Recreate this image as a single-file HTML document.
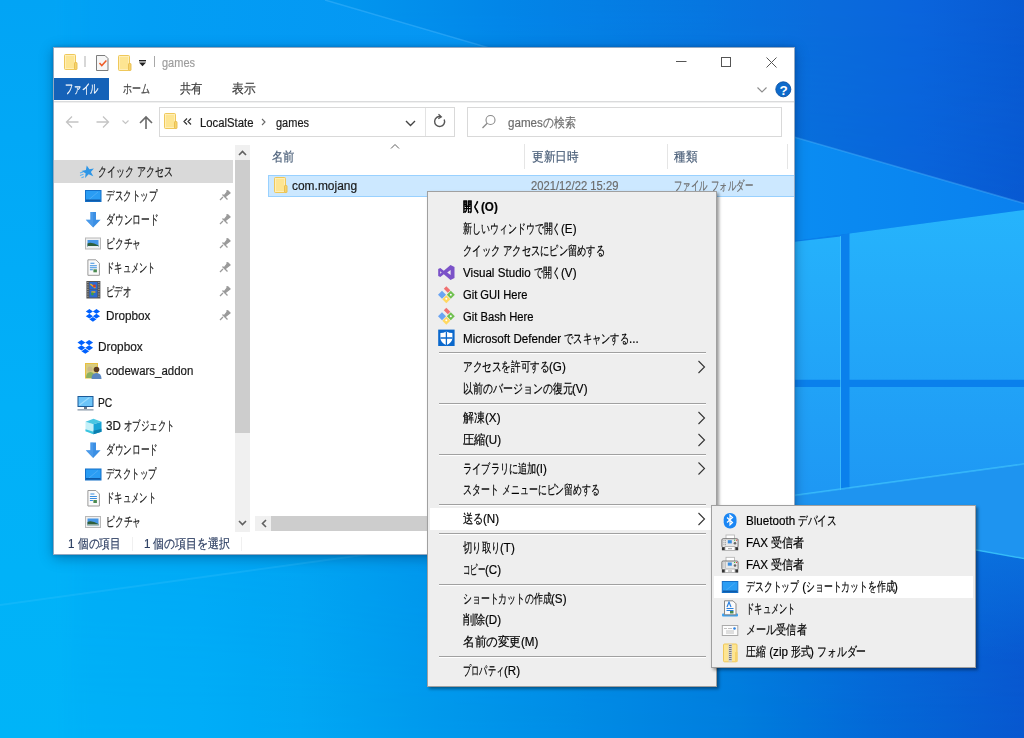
<!DOCTYPE html><html><head><meta charset="utf-8"><style>
html,body{margin:0;padding:0;width:1024px;height:738px;overflow:hidden;}
body{position:relative;font-family:"Liberation Sans",sans-serif;font-size:12px;color:#000;}
.a{position:absolute;}
.t{position:absolute;white-space:nowrap;line-height:16px;font-size:12.5px;height:16px;-webkit-text-stroke:0.2px currentColor;}
.t>span{display:inline-block;transform-origin:0 50%;}
svg{position:absolute;overflow:visible;}
#win{position:absolute;left:53px;top:47px;width:742px;height:508px;box-sizing:border-box;background:#fff;border:1px solid rgba(0,50,110,0.42);box-shadow:0 3px 12px rgba(0,30,70,0.35),0 0 3px rgba(0,30,70,0.25);}
.menu{position:absolute;box-sizing:border-box;background:#eeeeee;border:1px solid #a0a0a0;box-shadow:2px 2px 3px rgba(0,0,0,0.4);}
.sep{position:absolute;height:1px;background:#a0a0a0;}
</style></head><body>
<svg style="left:0;top:0" width="1024" height="738" viewBox="0 0 1024 738">
<defs>
<linearGradient id="baseB" x1="0" y1="0" x2="1024" y2="0" gradientUnits="userSpaceOnUse">
<stop offset="0" stop-color="#00b4f8"/>
<stop offset="0.195" stop-color="#00aef8"/>
<stop offset="0.293" stop-color="#02a8f4"/>
<stop offset="0.405" stop-color="#009cee"/>
<stop offset="0.72" stop-color="#007ede"/>
<stop offset="0.85" stop-color="#046ad8"/>
<stop offset="1" stop-color="#0858d0"/>
</linearGradient>
<linearGradient id="baseT" x1="0" y1="0" x2="1024" y2="0" gradientUnits="userSpaceOnUse">
<stop offset="0" stop-color="#02a6f6"/>
<stop offset="0.3" stop-color="#029af0"/>
<stop offset="0.488" stop-color="#0286e8"/>
<stop offset="0.684" stop-color="#0676e0"/>
<stop offset="0.8" stop-color="#0a6cdc"/>
<stop offset="0.9" stop-color="#0a64dc"/>
<stop offset="1" stop-color="#085ad2"/>
</linearGradient>
<linearGradient id="vfm" x1="0" y1="0" x2="0" y2="738" gradientUnits="userSpaceOnUse"><stop offset="0" stop-color="#fff"/><stop offset="1" stop-color="#000"/></linearGradient>
<mask id="vmask"><rect x="0" y="0" width="1024" height="738" fill="url(#vfm)"/></mask>
<linearGradient id="wedge" x1="0" y1="0" x2="1024" y2="0" gradientUnits="userSpaceOnUse">
<stop offset="0" stop-color="#02a6f6"/>
<stop offset="0.146" stop-color="#029ef4"/>
<stop offset="0.78" stop-color="#0a8cf2"/>
<stop offset="1" stop-color="#0a80ee"/>
</linearGradient>
<linearGradient id="pane" x1="0" y1="210" x2="0" y2="490" gradientUnits="userSpaceOnUse">
<stop offset="0" stop-color="#26b4fc"/>
<stop offset="1" stop-color="#1e98f4"/>
</linearGradient>
<linearGradient id="lfm" x1="0" y1="0" x2="90" y2="0" gradientUnits="userSpaceOnUse"><stop offset="0" stop-color="#fff"/><stop offset="0.6" stop-color="#fff"/><stop offset="1" stop-color="#000"/></linearGradient>
<mask id="lmask"><rect x="0" y="0" width="90" height="738" fill="url(#lfm)"/></mask>
<linearGradient id="lft" x1="0" y1="0" x2="0" y2="738" gradientUnits="userSpaceOnUse">
<stop offset="0" stop-color="#02a4f5"/>
<stop offset="0.55" stop-color="#02b0f8"/>
<stop offset="1" stop-color="#00b4f8"/>
</linearGradient>
</defs>
<rect width="1024" height="738" fill="url(#baseB)"/><rect width="1024" height="738" fill="url(#baseT)" mask="url(#vmask)"/>
<polygon points="0,0 325,0 794,137 1040,208 0,348" fill="url(#wedge)"/>
<rect x="0" y="0" width="90" height="738" fill="url(#lft)" mask="url(#lmask)"/>
<polyline points="325,0 794,137 1040,208" fill="none" stroke="#5cc0ff" stroke-opacity="0.35" stroke-width="1.5"/>
<linearGradient id="flr" x1="0" y1="540" x2="0" y2="660" gradientUnits="userSpaceOnUse"><stop offset="0" stop-color="#0a74e0" stop-opacity="0.9"/><stop offset="1" stop-color="#0a74e0" stop-opacity="0"/></linearGradient>
<polygon points="728,505 1024,558 1024,738 728,738" fill="url(#flr)"/>
<polygon points="728,505 1024,464 1024,558" fill="#1e94f0"/>
<line x1="728" y1="505" x2="1024" y2="558.5" stroke="#40d0ff" stroke-width="1.5" stroke-opacity="0.8"/>
<polygon points="760,245.6 1031,209 1031,463 760,500" fill="#0a80ec"/>
<polygon points="760,245.6 840.7,236.6 840.7,379.8 760,379.8" fill="url(#pane)"/>
<polygon points="849.5,233.5 1031,209 1031,379.8 849.5,379.8" fill="url(#pane)"/>
<polygon points="760,387 840.7,387 840.7,489.6 760,500" fill="url(#pane)"/>
<polygon points="849.5,387 1031,387 1031,463 849.5,488.3" fill="url(#pane)"/>
<line x1="0" y1="605" x2="1031" y2="463" stroke="#48c8ff" stroke-opacity="0.22" stroke-width="2"/>
<line x1="840.5" y1="236" x2="840.5" y2="490" stroke="#50d0ff" stroke-opacity="0.6" stroke-width="1"/><line x1="760" y1="500" x2="1031" y2="463" stroke="#48d0ff" stroke-opacity="0.5" stroke-width="1.3"/>
</svg>
<div id="win"></div>
<svg style="left:60px;top:50px" width="100" height="24" viewBox="60 50 100 24"><rect x="64.5" y="54.5" width="11" height="15" rx="1" fill="#fde592" stroke="#efc85a"/><rect x="65.5" y="55.5" width="9" height="13" fill="none" stroke="#fff0c0" stroke-width="0.8"/><rect x="74.5" y="62.5" width="2.5" height="7" rx="0.6" fill="#f6d36c" stroke="#e8bc4c" stroke-width="0.9"/><rect x="84.5" y="56" width="1" height="11" fill="#b0b0b0"/><path d="M96.5,55.5 h8.5 l3,3 v12 h-11.5z" fill="#f6f6f6" stroke="#7d7d7d" stroke-width="1"/><path d="M99.5,63 l2.3,2.6 l4.6,-5" fill="none" stroke="#ee5a26" stroke-width="1.5"/><rect x="118.5" y="55.5" width="11" height="15" rx="1" fill="#fde592" stroke="#efc85a"/><rect x="119.5" y="56.5" width="9" height="13" fill="none" stroke="#fff0c0" stroke-width="0.8"/><rect x="128.5" y="63.5" width="2.5" height="7" rx="0.6" fill="#f6d36c" stroke="#e8bc4c" stroke-width="0.9"/><rect x="139" y="60" width="7" height="1.4" fill="#222"/><path d="M139,62.5 h7 l-3.5,3.8z" fill="#222"/><rect x="154" y="56" width="1" height="11" fill="#a8a8a8"/></svg>
<div class="t" style="left:162px;top:55px;width:33px;color:#9d9d9d;"><span>games</span></div>
<svg style="left:670px;top:52px" width="115" height="20" viewBox="670 52 115 20"><rect x="676" y="61" width="10.5" height="1" fill="#555"/><rect x="721.5" y="57.5" width="9" height="9" fill="none" stroke="#555" stroke-width="1"/><path d="M766.5,57.5 L776.5,67.5 M776.5,57.5 L766.5,67.5" stroke="#555" stroke-width="1"/></svg>
<div class="a" style="left:54px;top:78px;width:55px;height:22px;background:#1562b8;"></div>
<div class="t" style="left:65px;top:81px;width:33px;color:#fff;"><span>ファイル</span></div>
<div class="t" style="left:123px;top:81px;width:27px;color:#3c3c3c;"><span>ホーム</span></div>
<div class="t" style="left:179.5px;top:81px;width:22.5px;color:#3c3c3c;"><span>共有</span></div>
<div class="t" style="left:231.5px;top:81px;width:23.5px;color:#3c3c3c;"><span>表示</span></div>
<svg style="left:750px;top:78px" width="44" height="24" viewBox="750 78 44 24"><path d="M757.5,87.5 l4.5,4.5 l4.5,-4.5" fill="none" stroke="#8c8c8c" stroke-width="1.1"/><circle cx="783.3" cy="89.3" r="7.5" fill="#0d6acb" stroke="#0a52a6" stroke-width="0.9"/><text x="783.5" y="94.6" text-anchor="middle" font-family="Liberation Sans" font-weight="bold" font-size="13.5" fill="#fff">?</text></svg>
<div class="a" style="left:54px;top:101px;width:740px;height:1px;background:#dadbdc;"></div>
<div class="a" style="left:54px;top:102px;width:740px;height:1px;background:#f0f0f0;"></div>
<svg style="left:60px;top:108px" width="100" height="28" viewBox="60 108 100 28"><path d="M78.5,122 h-11.5 M72,116.5 l-5.5,5.5 l5.5,5.5" fill="none" stroke="#c4c4c4" stroke-width="1.3"/><path d="M96.5,122 h11.5 M103,116.5 l5.5,5.5 l-5.5,5.5" fill="none" stroke="#c4c4c4" stroke-width="1.3"/><path d="M122.5,120.5 l3,3 l3,-3" fill="none" stroke="#c4c4c4" stroke-width="1.1"/><path d="M146,129 v-12 M140,123 l6,-6 l6,6" fill="none" stroke="#6a6a6a" stroke-width="1.6"/></svg>
<div class="a" style="left:159px;top:107px;width:296px;height:30px;box-sizing:border-box;border:1px solid #d9d9d9;"></div>
<div class="a" style="left:425px;top:108px;width:1px;height:28px;background:#e3e3e3;"></div>
<svg style="left:160px;top:108px" width="295" height="28" viewBox="160 108 295 28"><rect x="164.5" y="113.5" width="11" height="15" rx="1" fill="#fde592" stroke="#efc85a"/><rect x="165.5" y="114.5" width="9" height="13" fill="none" stroke="#fff0c0" stroke-width="0.8"/><rect x="174.5" y="121.5" width="2.5" height="7" rx="0.6" fill="#f6d36c" stroke="#e8bc4c" stroke-width="0.9"/><path d="M187,118.5 l-3,3 l3,3 M191,118.5 l-3,3 l3,3" fill="none" stroke="#333" stroke-width="1.2"/><path d="M262,119 l3,3 l-3,3" fill="none" stroke="#666" stroke-width="1.1"/><path d="M406,121 l4.5,4.5 l4.5,-4.5" fill="none" stroke="#444" stroke-width="1.4"/><path d="M444.2,119.5 a5,5 0 1 1 -3.2,-2.8" fill="none" stroke="#555" stroke-width="1.4"/><path d="M438.5,114.3 l2.8,2.6 l-3,1.8" fill="none" stroke="#555" stroke-width="1.3"/></svg>
<div class="t" style="left:199.5px;top:114.5px;width:53.5px;color:#1a1a1a;"><span>LocalState</span></div>
<div class="t" style="left:275.5px;top:114.5px;width:33px;color:#1a1a1a;"><span>games</span></div>
<div class="a" style="left:467px;top:107px;width:315px;height:30px;box-sizing:border-box;border:1px solid #d9d9d9;"></div>
<svg style="left:478px;top:110px" width="24" height="24" viewBox="478 110 24 24"><circle cx="490.5" cy="120" r="4.5" fill="none" stroke="#8a8a8a" stroke-width="1.1"/><path d="M487.2,123.3 l-4.7,4.7" stroke="#8a8a8a" stroke-width="1.3"/></svg>
<div class="t" style="left:508px;top:114.5px;width:67.5px;color:#6d6d6d;"><span>gamesの検索</span></div>
<div class="a" style="left:54px;top:160px;width:179px;height:23px;background:#d9d9d9;"></div>
<div class="a" style="left:235px;top:145px;width:15px;height:387px;background:#f0f0f0;"></div>
<div class="a" style="left:235px;top:160px;width:15px;height:273px;background:#cdcdcd;"></div>
<svg style="left:235px;top:145px" width="15" height="387" viewBox="235 145 15 387"><path d="M239,155 l3.5,-3.5 l3.5,3.5" fill="none" stroke="#606060" stroke-width="1.6"/><path d="M239,521 l3.5,3.5 l3.5,-3.5" fill="none" stroke="#606060" stroke-width="1.6"/></svg>
<svg style="left:76px;top:164px" width="20" height="16" viewBox="76 164 20 16"><g transform="rotate(-12 87.5 171.5)"><path d="M88.0,165.5 l1.8,4.3 h4.6 l-3.7,2.9 l1.5,4.6 l-4.2,-2.8 l-4.2,2.8 l1.5,-4.6 l-3.7,-2.9 h4.6z" fill="#2e96e6"/></g><path d="M80.0,173.0 l3,-1 M80.0,175.5 l3.5,-1.3 M81.5,177.8 l2.5,-1" stroke="#5ab0f0" stroke-width="1.1"/></svg>
<div class="t" style="left:98.2px;top:163.5px;width:74.8px;color:#1a1a1a;"><span>クイック アクセス</span></div>
<svg style="left:80px;top:183px" width="24" height="24" viewBox="80 183 24 24"><rect x="85.5" y="190.5" width="15.5" height="11" fill="#2a9df4" stroke="#1570c8"/><path d="M89,199.5 L98,192" stroke="#4aacf6" stroke-width="1"/><rect x="86" y="199.5" width="14.5" height="1.6" fill="#0e5aa8"/></svg>
<div class="t" style="left:106.3px;top:187.5px;width:51.1px;color:#1a1a1a;"><span>デスクトップ</span></div>
<svg style="left:218px;top:188px" width="16" height="14" viewBox="218 188 16 14"><path d="M223,197 l-3,3 M222.5,194.5 l5,5 M224,196 l4,-5 l2,2 l-5,4z M226.5,190.5 l3,3" fill="#9a9a9a" stroke="#9a9a9a" stroke-width="1.3"/></svg>
<svg style="left:80px;top:207px" width="24" height="24" viewBox="80 207 24 24"><path d="M90.4,212 h5.6 v7.8 h4.6 l-7.4,7.8 l-7.4,-7.8 h4.6z" fill="#3b8fe4"/><path d="M90.4,212 h2.8 v15.6 l-7.4,-7.8 h4.6z" fill="#5aa6f0" fill-opacity="0.5"/></svg>
<div class="t" style="left:106.3px;top:211.5px;width:52.5px;color:#1a1a1a;"><span>ダウンロード</span></div>
<svg style="left:218px;top:212px" width="16" height="14" viewBox="218 212 16 14"><path d="M223,221 l-3,3 M222.5,218.5 l5,5 M224,220 l4,-5 l2,2 l-5,4z M226.5,214.5 l3,3" fill="#9a9a9a" stroke="#9a9a9a" stroke-width="1.3"/></svg>
<svg style="left:80px;top:231px" width="24" height="24" viewBox="80 231 24 24"><rect x="85.5" y="238.0" width="15" height="11" fill="#f0f0f0" stroke="#b8b8b8"/><rect x="87.5" y="240.0" width="11" height="7" fill="#4596e6"/><path d="M87.5,243.5 q4,-2 11,2 v1.5 h-11z" fill="#2f5f3a"/><rect x="87.5" y="246.0" width="11" height="1" fill="#e8eef4"/></svg>
<div class="t" style="left:106.3px;top:235.5px;width:35px;color:#1a1a1a;"><span>ピクチャ</span></div>
<svg style="left:218px;top:236px" width="16" height="14" viewBox="218 236 16 14"><path d="M223,245 l-3,3 M222.5,242.5 l5,5 M224,244 l4,-5 l2,2 l-5,4z M226.5,238.5 l3,3" fill="#9a9a9a" stroke="#9a9a9a" stroke-width="1.3"/></svg>
<svg style="left:80px;top:255px" width="24" height="24" viewBox="80 255 24 24"><path d="M87.9,259.8 h8 l3.5,3.5 v12 h-11.5z" fill="#fafafa" stroke="#9a9a9a"/><path d="M90.4,263.3 h4 M89.9,265.8 h7 M89.9,267.8 h7 M89.9,269.8 h3" stroke="#3a8ee0" stroke-width="1.1"/><rect x="93.4" y="269.3" width="3.5" height="3" fill="#4a8a50"/></svg>
<div class="t" style="left:106.3px;top:259.5px;width:49.5px;color:#1a1a1a;"><span>ドキュメント</span></div>
<svg style="left:218px;top:260px" width="16" height="14" viewBox="218 260 16 14"><path d="M223,269 l-3,3 M222.5,266.5 l5,5 M224,268 l4,-5 l2,2 l-5,4z M226.5,262.5 l3,3" fill="#9a9a9a" stroke="#9a9a9a" stroke-width="1.3"/></svg>
<svg style="left:80px;top:279px" width="24" height="24" viewBox="80 279 24 24"><rect x="86.4" y="281" width="14" height="17.5" fill="#555"/><rect x="89.4" y="282" width="8" height="7.5" fill="#2c6ad0"/><rect x="89.4" y="290" width="8" height="7.5" fill="#2c6ad0"/><path d="M90.4,284 l5,4 M91.4,292 h4" stroke="#e8b020" stroke-width="1.6"/><circle cx="94.4" cy="286" r="1.4" fill="#d43a2a"/><circle cx="92.4" cy="294" r="1.4" fill="#38a048"/><path d="M87.9,282 v16 M98.9,282 v16" stroke="#bbb" stroke-width="1" stroke-dasharray="1 1.3"/></svg>
<div class="t" style="left:106.3px;top:283.5px;width:25.3px;color:#1a1a1a;"><span>ビデオ</span></div>
<svg style="left:218px;top:284px" width="16" height="14" viewBox="218 284 16 14"><path d="M223,293 l-3,3 M222.5,290.5 l5,5 M224,292 l4,-5 l2,2 l-5,4z M226.5,286.5 l3,3" fill="#9a9a9a" stroke="#9a9a9a" stroke-width="1.3"/></svg>
<svg style="left:80px;top:303px" width="24" height="24" viewBox="80 303 24 24"><g transform="translate(85.8,309) scale(0.95)"><path d="M3.8,0 L0,2.5 L3.8,5 L7.5,2.5z M11.2,0 L7.5,2.5 L11.2,5 L15,2.5z M3.8,5 L0,7.5 L3.8,10 L7.5,7.5z M11.2,5 L7.5,7.5 L11.2,10 L15,7.5z M7.5,8.3 L3.8,10.8 L7.5,13.3 L11.2,10.8z" fill="#0061fe"/></g></svg>
<div class="t" style="left:106.3px;top:307.5px;width:44.4px;color:#1a1a1a;"><span>Dropbox</span></div>
<svg style="left:218px;top:308px" width="16" height="14" viewBox="218 308 16 14"><path d="M223,317 l-3,3 M222.5,314.5 l5,5 M224,316 l4,-5 l2,2 l-5,4z M226.5,310.5 l3,3" fill="#9a9a9a" stroke="#9a9a9a" stroke-width="1.3"/></svg>
<svg style="left:74px;top:336px" width="24" height="20" viewBox="74 336 24 20"><g transform="translate(77.5,340) scale(1.04)"><path d="M3.8,0 L0,2.5 L3.8,5 L7.5,2.5z M11.2,0 L7.5,2.5 L11.2,5 L15,2.5z M3.8,5 L0,7.5 L3.8,10 L7.5,7.5z M11.2,5 L7.5,7.5 L11.2,10 L15,7.5z M7.5,8.3 L3.8,10.8 L7.5,13.3 L11.2,10.8z" fill="#0061fe"/></g></svg>
<div class="t" style="left:98.3px;top:338.5px;width:44.7px;color:#1a1a1a;"><span>Dropbox</span></div>
<svg style="left:82px;top:360px" width="24" height="22" viewBox="82 360 24 22"><rect x="85.5" y="363.5" width="12" height="14.5" fill="#d8cc80" stroke="#e8c040"/><circle cx="90" cy="369" r="2.6" fill="#c8b888"/><path d="M86,378 q0,-6 4.5,-6 q4,0 4.5,6z" fill="#8cb060"/><circle cx="96.5" cy="369.5" r="2.8" fill="#5a3a20"/><path d="M91.5,379 q0,-6 5,-6 q5,0 5,6z" fill="#5a86c0"/></svg>
<div class="t" style="left:106.4px;top:362.5px;width:87.3px;color:#1a1a1a;"><span>codewars_addon</span></div>
<svg style="left:74px;top:392px" width="24" height="22" viewBox="74 392 24 22"><rect x="78.0" y="396.5" width="15" height="10" fill="#6cc4f8" stroke="#1c5a98"/><path d="M79.5,405 L89.5,397.5" stroke="#9adafc" stroke-width="1.3"/><rect x="84.0" y="407" width="3" height="2" fill="#6a7a8a"/><rect x="77.5" y="409.2" width="16" height="1.3" fill="#8a9aaa"/></svg>
<div class="t" style="left:98.3px;top:394.5px;width:14.3px;color:#1a1a1a;"><span>PC</span></div>
<svg style="left:80px;top:414px" width="24" height="24" viewBox="80 414 24 24"><path d="M85.5,421.7 L93.5,424.2 L93.5,434.2 L85.5,431.2z" fill="#c4f0f8"/><path d="M85.5,429.2 L93.5,431.7 L93.5,434.2 L85.5,431.2z" fill="#38c4e0"/><path d="M85.5,421.7 L93.5,424.2 L101.5,421.7 L93.5,418.7z" fill="#48c6e2"/><path d="M93.5,424.2 L101.5,421.7 L101.5,431.7 L93.5,434.2z" fill="#18a4d6"/><path d="M93.5,430.7 L101.5,428.7 L101.5,431.7 L93.5,434.2z" fill="#0a80b0"/></svg>
<div class="t" style="left:106.4px;top:418px;width:68.5px;color:#1a1a1a;"><span>3D オブジェクト</span></div>
<svg style="left:80px;top:438px" width="24" height="24" viewBox="80 438 24 24"><path d="M90.4,442.5 h5.6 v7.8 h4.6 l-7.4,7.8 l-7.4,-7.8 h4.6z" fill="#3b8fe4"/><path d="M90.4,442.5 h2.8 v15.6 l-7.4,-7.8 h4.6z" fill="#5aa6f0" fill-opacity="0.5"/></svg>
<div class="t" style="left:106.4px;top:442px;width:52.1px;color:#1a1a1a;"><span>ダウンロード</span></div>
<svg style="left:80px;top:462px" width="24" height="24" viewBox="80 462 24 24"><rect x="85.5" y="469.0" width="15.5" height="11" fill="#2a9df4" stroke="#1570c8"/><path d="M89,478.0 L98,470.5" stroke="#4aacf6" stroke-width="1"/><rect x="86" y="478.0" width="14.5" height="1.6" fill="#0e5aa8"/></svg>
<div class="t" style="left:106.4px;top:466px;width:50.9px;color:#1a1a1a;"><span>デスクトップ</span></div>
<svg style="left:80px;top:486px" width="24" height="24" viewBox="80 486 24 24"><path d="M87.9,490.5 h8 l3.5,3.5 v12 h-11.5z" fill="#fafafa" stroke="#9a9a9a"/><path d="M90.4,494 h4 M89.9,496.5 h7 M89.9,498.5 h7 M89.9,500.5 h3" stroke="#3a8ee0" stroke-width="1.1"/><rect x="93.4" y="500" width="3.5" height="3" fill="#4a8a50"/></svg>
<div class="t" style="left:106.4px;top:490px;width:50px;color:#1a1a1a;"><span>ドキュメント</span></div>
<svg style="left:80px;top:509px" width="24" height="24" viewBox="80 509 24 24"><rect x="85.5" y="516.5" width="15" height="11" fill="#f0f0f0" stroke="#b8b8b8"/><rect x="87.5" y="518.5" width="11" height="7" fill="#4596e6"/><path d="M87.5,522 q4,-2 11,2 v1.5 h-11z" fill="#2f5f3a"/><rect x="87.5" y="524.5" width="11" height="1" fill="#e8eef4"/></svg>
<div class="t" style="left:106.4px;top:513.5px;width:35.1px;color:#1a1a1a;"><span>ピクチャ</span></div>
<div class="t" style="left:272px;top:148.5px;width:22.5px;color:#4c607a;"><span>名前</span></div>
<svg style="left:388px;top:142px" width="14" height="8" viewBox="388 142 14 8"><path d="M391,148.5 l4,-4 l4,4" fill="none" stroke="#606060" stroke-width="1"/></svg>
<div class="a" style="left:524px;top:144px;width:1px;height:25px;background:#e5e5e5;"></div>
<div class="a" style="left:667px;top:144px;width:1px;height:25px;background:#e5e5e5;"></div>
<div class="a" style="left:787px;top:144px;width:1px;height:25px;background:#e5e5e5;"></div>
<div class="t" style="left:531.5px;top:148.5px;width:46.7px;color:#4c607a;"><span>更新日時</span></div>
<div class="t" style="left:674px;top:148.5px;width:23.3px;color:#4c607a;"><span>種類</span></div>
<div class="a" style="left:268px;top:175px;width:526px;height:22px;box-sizing:border-box;background:#cce8ff;border:1px solid #99d1ff;border-right:none;"></div>
<svg style="left:270px;top:174px" width="24" height="24" viewBox="270 174 24 24"><rect x="274.5" y="177.5" width="11" height="15" rx="1" fill="#fde592" stroke="#efc85a"/><rect x="275.5" y="178.5" width="9" height="13" fill="none" stroke="#fff0c0" stroke-width="0.8"/><rect x="284.5" y="185.5" width="2.5" height="7" rx="0.6" fill="#f6d36c" stroke="#e8bc4c" stroke-width="0.9"/></svg>
<div class="t" style="left:292.2px;top:178px;width:65.1px;color:#1a1a1a;"><span>com.mojang</span></div>
<div class="t" style="left:531px;top:178px;width:87.4px;color:#6d6d6d;"><span>2021/12/22 15:29</span></div>
<div class="t" style="left:674px;top:178px;width:79.2px;color:#6d6d6d;"><span>ファイル フォルダー</span></div>
<div class="a" style="left:255px;top:516px;width:539px;height:15px;background:#f0f0f0;"></div>
<div class="a" style="left:271px;top:516px;width:523px;height:15px;background:#cdcdcd;"></div>
<svg style="left:255px;top:516px" width="16" height="15" viewBox="255 516 16 15"><path d="M266,520 l-3.5,3.5 l3.5,3.5" fill="none" stroke="#606060" stroke-width="1.6"/></svg>
<div class="t" style="left:68.2px;top:535.5px;width:52.5px;color:#2c3e62;"><span>1 個の項目</span></div>
<div class="a" style="left:132px;top:537px;width:1px;height:14px;background:#f0f0f0;"></div>
<div class="t" style="left:143.5px;top:535.5px;width:86.6px;color:#2c3e62;"><span>1 個の項目を選択</span></div>
<div class="a" style="left:241px;top:537px;width:1px;height:14px;background:#f0f0f0;"></div>
<div class="menu" style="left:427px;top:191px;width:290px;height:496px;"></div>
<div class="a" style="left:430px;top:508px;width:284px;height:22px;background:#fff;"></div>
<div class="t" style="left:462.8px;top:199px;width:35.2px;color:#000;font-weight:bold;"><span>開く(O)</span></div>
<div class="t" style="left:462.8px;top:221px;width:113.9px;color:#000;"><span>新しいウィンドウで開く(E)</span></div>
<div class="t" style="left:462.8px;top:243px;width:142.2px;color:#000;"><span>クイック アクセスにピン留めする</span></div>
<div class="t" style="left:462.8px;top:265px;width:113.6px;color:#000;"><span>Visual Studio で開く(V)</span></div>
<div class="t" style="left:462.8px;top:287px;width:64.4px;color:#000;"><span>Git GUI Here</span></div>
<div class="t" style="left:462.8px;top:309px;width:70.5px;color:#000;"><span>Git Bash Here</span></div>
<div class="t" style="left:462.8px;top:331px;width:176.1px;color:#000;"><span>Microsoft Defender でスキャンする...</span></div>
<div class="t" style="left:462.8px;top:359px;width:103.3px;color:#000;"><span>アクセスを許可する(G)</span></div>
<div class="t" style="left:462.8px;top:381px;width:125px;color:#000;"><span>以前のバージョンの復元(V)</span></div>
<div class="t" style="left:462.8px;top:410px;width:37.4px;color:#000;"><span>解凍(X)</span></div>
<div class="t" style="left:462.8px;top:432px;width:38.6px;color:#000;"><span>圧縮(U)</span></div>
<div class="t" style="left:462.8px;top:460.5px;width:84.5px;color:#000;"><span>ライブラリに追加(I)</span></div>
<div class="t" style="left:462.8px;top:482px;width:136.8px;color:#000;"><span>スタート メニューにピン留めする</span></div>
<div class="t" style="left:462.8px;top:511px;width:36.6px;color:#000;"><span>送る(N)</span></div>
<div class="t" style="left:462.8px;top:540px;width:52.3px;color:#000;"><span>切り取り(T)</span></div>
<div class="t" style="left:462.8px;top:562px;width:38.6px;color:#000;"><span>コピー(C)</span></div>
<div class="t" style="left:462.8px;top:590.5px;width:104.2px;color:#000;"><span>ショートカットの作成(S)</span></div>
<div class="t" style="left:462.8px;top:612px;width:38.6px;color:#000;"><span>削除(D)</span></div>
<div class="t" style="left:462.8px;top:634px;width:75.5px;color:#000;"><span>名前の変更(M)</span></div>
<div class="t" style="left:462.8px;top:663px;width:57px;color:#000;"><span>プロパティ(R)</span></div>
<div class="sep" style="left:439px;top:352px;width:267px;"></div>
<div class="a" style="left:439px;top:353px;width:267px;height:1px;background:#fff;"></div>
<div class="sep" style="left:439px;top:403px;width:267px;"></div>
<div class="a" style="left:439px;top:404px;width:267px;height:1px;background:#fff;"></div>
<div class="sep" style="left:439px;top:454px;width:267px;"></div>
<div class="a" style="left:439px;top:455px;width:267px;height:1px;background:#fff;"></div>
<div class="sep" style="left:439px;top:504px;width:267px;"></div>
<div class="a" style="left:439px;top:505px;width:267px;height:1px;background:#fff;"></div>
<div class="sep" style="left:439px;top:533px;width:267px;"></div>
<div class="a" style="left:439px;top:534px;width:267px;height:1px;background:#fff;"></div>
<div class="sep" style="left:439px;top:584px;width:267px;"></div>
<div class="a" style="left:439px;top:585px;width:267px;height:1px;background:#fff;"></div>
<div class="sep" style="left:439px;top:656px;width:267px;"></div>
<div class="a" style="left:439px;top:657px;width:267px;height:1px;background:#fff;"></div>
<svg style="left:695px;top:359px" width="14" height="16" viewBox="695 359 14 16"><path d="M698.5,361 l6,6 l-6,6" fill="none" stroke="#333" stroke-width="1.1"/></svg>
<svg style="left:695px;top:410px" width="14" height="16" viewBox="695 410 14 16"><path d="M698.5,412 l6,6 l-6,6" fill="none" stroke="#333" stroke-width="1.1"/></svg>
<svg style="left:695px;top:432px" width="14" height="16" viewBox="695 432 14 16"><path d="M698.5,434 l6,6 l-6,6" fill="none" stroke="#333" stroke-width="1.1"/></svg>
<svg style="left:695px;top:460px" width="14" height="16" viewBox="695 460 14 16"><path d="M698.5,462.5 l6,6 l-6,6" fill="none" stroke="#333" stroke-width="1.1"/></svg>
<svg style="left:695px;top:511px" width="14" height="16" viewBox="695 511 14 16"><path d="M698.5,513 l6,6 l-6,6" fill="none" stroke="#333" stroke-width="1.1"/></svg>
<svg style="left:436px;top:262px" width="20" height="20" viewBox="436 262 20 20"><path d="M450.5,265 L454.5,267 L454.5,278 L450.5,280 L443.8,274.2 L440.3,277 L438.2,276 L438.2,269 L440.3,268 L443.8,270.8z M450.6,270 L447.2,272.5 L450.6,275z M440.2,271.3 v2.4 l1.5,-1.2z" fill="#7b52c8" fill-rule="evenodd"/></svg>
<svg style="left:436px;top:284px" width="20" height="20" viewBox="436 284 20 20"><path d="M446.3,286.2 l4,4 l-2.5,2.5 l-4,-4z" fill="#f07070"/><path d="M450.8,290.7 l4,4 l-4,4 l-4,-4z" fill="#70c050"/><circle cx="450.8" cy="294.7" r="1" fill="#fff"/><path d="M446.3,295.2 l4,4 l-4,4 l-4,-4z" fill="#ffd860"/><circle cx="446.3" cy="298.7" r="1" fill="#fff"/><path d="M442,290.7 l4,4 l-4,4 l-4,-4z" fill="#6aa4f2"/></svg>
<svg style="left:436px;top:306px" width="20" height="20" viewBox="436 306 20 20"><path d="M446.3,307.8 l4,4 l-2.5,2.5 l-4,-4z" fill="#f07070"/><path d="M450.8,312.3 l4,4 l-4,4 l-4,-4z" fill="#70c050"/><circle cx="450.8" cy="316.3" r="1" fill="#fff"/><path d="M446.3,316.8 l4,4 l-4,4 l-4,-4z" fill="#ffd860"/><circle cx="446.3" cy="320.3" r="1" fill="#fff"/><path d="M442,312.3 l4,4 l-4,4 l-4,-4z" fill="#6aa4f2"/></svg>
<svg style="left:436px;top:328px" width="20" height="20" viewBox="436 328 20 20"><rect x="438.2" y="329.6" width="16.4" height="16.4" fill="#0a68cc"/><path d="M446.4,331.5 q3,1.5 6,1.5 v5 q0,4.5 -6,7.3 q-6,-2.8 -6,-7.3 v-5 q3,0 6,-1.5z" fill="#fff"/><path d="M446.4,331.5 v13.8 M440.4,338 h12" stroke="#0a68cc" stroke-width="1.3"/></svg>
<div class="menu" style="left:711px;top:505px;width:265px;height:163px;"></div>
<div class="a" style="left:714px;top:576px;width:259px;height:22px;background:#fff;"></div>
<div class="t" style="left:745.8px;top:512.6px;width:91.1px;color:#000;"><span>Bluetooth デバイス</span></div>
<div class="t" style="left:745.8px;top:535px;width:58.6px;color:#000;"><span>FAX 受信者</span></div>
<div class="t" style="left:745.8px;top:556.7px;width:58.6px;color:#000;"><span>FAX 受信者</span></div>
<div class="t" style="left:745.8px;top:579px;width:152.5px;color:#000;"><span>デスクトップ (ショートカットを作成)</span></div>
<div class="t" style="left:745.8px;top:600.7px;width:49.5px;color:#000;"><span>ドキュメント</span></div>
<div class="t" style="left:745.8px;top:622.4px;width:60.7px;color:#000;"><span>メール受信者</span></div>
<div class="t" style="left:745.8px;top:644px;width:121px;color:#000;"><span>圧縮 (zip 形式) フォルダー</span></div>
<svg style="left:720px;top:510px" width="20" height="20" viewBox="720 510 20 20"><rect x="723.7" y="513" width="12.8" height="15.5" rx="6.2" fill="#1a86f4"/><path d="M727,517.5 l5.5,5 l-2.5,2.3 v-9.6 l2.5,2.3 l-5.5,5" fill="none" stroke="#fff" stroke-width="1.2"/></svg>
<svg style="left:720px;top:532px" width="20" height="20" viewBox="720 532 20 20"><rect x="726" y="535.0" width="8.5" height="4" fill="#fff" stroke="#b0b0b0" stroke-width="0.8"/><rect x="721.9" y="538.7" width="16.2" height="8.8" rx="1.2" fill="#e8e8e8" stroke="#6a6a6a" stroke-width="0.9"/><path d="M723.5,540.7 h3 M723.5,542.7 h3 M723.5,544.7 h3" stroke="#8a8a8a" stroke-width="0.9" stroke-dasharray="0.9 0.6"/><rect x="727.8" y="540.2" width="4" height="3.2" fill="#3a8ee0"/><circle cx="735" cy="543.2" r="1.3" fill="#666"/><rect x="734" y="539.7" width="1.2" height="1" fill="#40c040"/><rect x="736" y="539.7" width="1.2" height="1" fill="#e04040"/><rect x="721.9" y="547.3000000000001" width="3" height="3" fill="#333"/><rect x="735.2" y="547.3000000000001" width="3" height="3" fill="#333"/><rect x="725" y="546.7" width="10" height="3.6" fill="#fff" stroke="#999" stroke-width="0.7"/><path d="M728,548.7 h4" stroke="#888" stroke-width="0.8"/></svg>
<svg style="left:720px;top:554px" width="20" height="20" viewBox="720 554 20 20"><rect x="726" y="557.3" width="8.5" height="4" fill="#fff" stroke="#b0b0b0" stroke-width="0.8"/><rect x="721.9" y="561" width="16.2" height="8.8" rx="1.2" fill="#e8e8e8" stroke="#6a6a6a" stroke-width="0.9"/><path d="M723.5,563 h3 M723.5,565 h3 M723.5,567 h3" stroke="#8a8a8a" stroke-width="0.9" stroke-dasharray="0.9 0.6"/><rect x="727.8" y="562.5" width="4" height="3.2" fill="#3a8ee0"/><circle cx="735" cy="565.5" r="1.3" fill="#666"/><rect x="734" y="562" width="1.2" height="1" fill="#40c040"/><rect x="736" y="562" width="1.2" height="1" fill="#e04040"/><rect x="721.9" y="569.6" width="3" height="3" fill="#333"/><rect x="735.2" y="569.6" width="3" height="3" fill="#333"/><rect x="725" y="569" width="10" height="3.6" fill="#fff" stroke="#999" stroke-width="0.7"/><path d="M728,571 h4" stroke="#888" stroke-width="0.8"/></svg>
<svg style="left:720px;top:578px" width="20" height="16" viewBox="720 578 20 16"><rect x="722.3" y="581.5" width="15.5" height="11" fill="#2a9df4" stroke="#1570c8"/><path d="M725.8,590.5 L734.8,583" stroke="#4aacf6" stroke-width="1"/><rect x="722.8" y="590.5" width="14.5" height="1.6" fill="#0e5aa8"/></svg>
<svg style="left:720px;top:598px" width="20" height="20" viewBox="720 598 20 20"><rect x="722" y="613.5" width="16" height="3" rx="1" fill="#3aa0f0"/><path d="M724.5,600.8 h8.5 l3,3 v11 h-11.5z" fill="#fafafa" stroke="#888"/><path d="M727,607 l2,-5 l2,5" fill="none" stroke="#2a80e0" stroke-width="1.2"/><path d="M726.5,608.5 h7 M726.5,610.5 h7" stroke="#2a80e0" stroke-width="1"/><rect x="730" y="611" width="3.5" height="2.5" fill="#4a8a50"/></svg>
<svg style="left:720px;top:622px" width="20" height="16" viewBox="720 622 20 16"><rect x="722.3" y="625.5" width="15.5" height="10" fill="#fcfcfc" stroke="#aaa"/><circle cx="734.5" cy="628.5" r="1.3" fill="#2a80e0"/><path d="M724,628.5 h3 M728,628.5 h4 M726,631 h8 M726,633 h8" stroke="#bbb" stroke-width="0.9"/></svg>
<svg style="left:720px;top:642px" width="20" height="22" viewBox="720 642 20 22"><rect x="723.5" y="644" width="13.5" height="17.8" rx="1" fill="#fde592" stroke="#efc85a"/><rect x="735" y="652" width="2.5" height="9.8" fill="#f6d36c"/><rect x="728.5" y="644" width="3.5" height="17.8" fill="#cfcfcf"/><path d="M729,645.5 h2.5 M729,647.5 h2.5 M729,649.5 h2.5 M729,651.5 h2.5 M729,653.5 h2.5 M729,655.5 h2.5 M729,657.5 h2.5 M729,659.5 h2.5" stroke="#666" stroke-width="0.8"/></svg>
<script>
(function(){
var re=/([\u3000-\u30ff\u3400-\u9fff\uff00-\uffef]+)/;
var els=document.querySelectorAll('.t');
for(var i=0;i<els.length;i++){
 var e=els[i],s=e.firstElementChild,W=parseFloat(e.style.width);
 var parts=s.textContent.split(re).filter(function(p){return p.length>0;});
 s.innerHTML='';
 var sp=[],L=0,C=0;
 for(var j=0;j<parts.length;j++){
  var p=parts[j],o=document.createElement('span'),n=document.createElement('span');
  o.style.cssText='display:inline-block;white-space:pre;';
  n.style.cssText='display:inline-block;white-space:pre;transform-origin:0 50%;';
  n.textContent=p;o.appendChild(n);s.appendChild(o);
  var w=n.getBoundingClientRect().width,cj=re.test(p);
  if(cj)C+=w;else L+=w;
  sp.push([o,n,w,cj]);
 }
 var sL=0.93,sC=1;
 if(C>0&&L>0){sC=(W-sL*L)/C;if(sC<0.45||sC>1.3){sL=sC=W/(L+C);}}
 else if(C>0){sC=W/C;}
 else if(L>0){sL=W/L;}
 for(var k=0;k<sp.length;k++){var a=sp[k],sc=a[3]?sC:sL;a[0].style.width=(a[2]*sc)+'px';a[1].style.transform='scaleX('+sc+')';}
}
})();
</script>
</body></html>
